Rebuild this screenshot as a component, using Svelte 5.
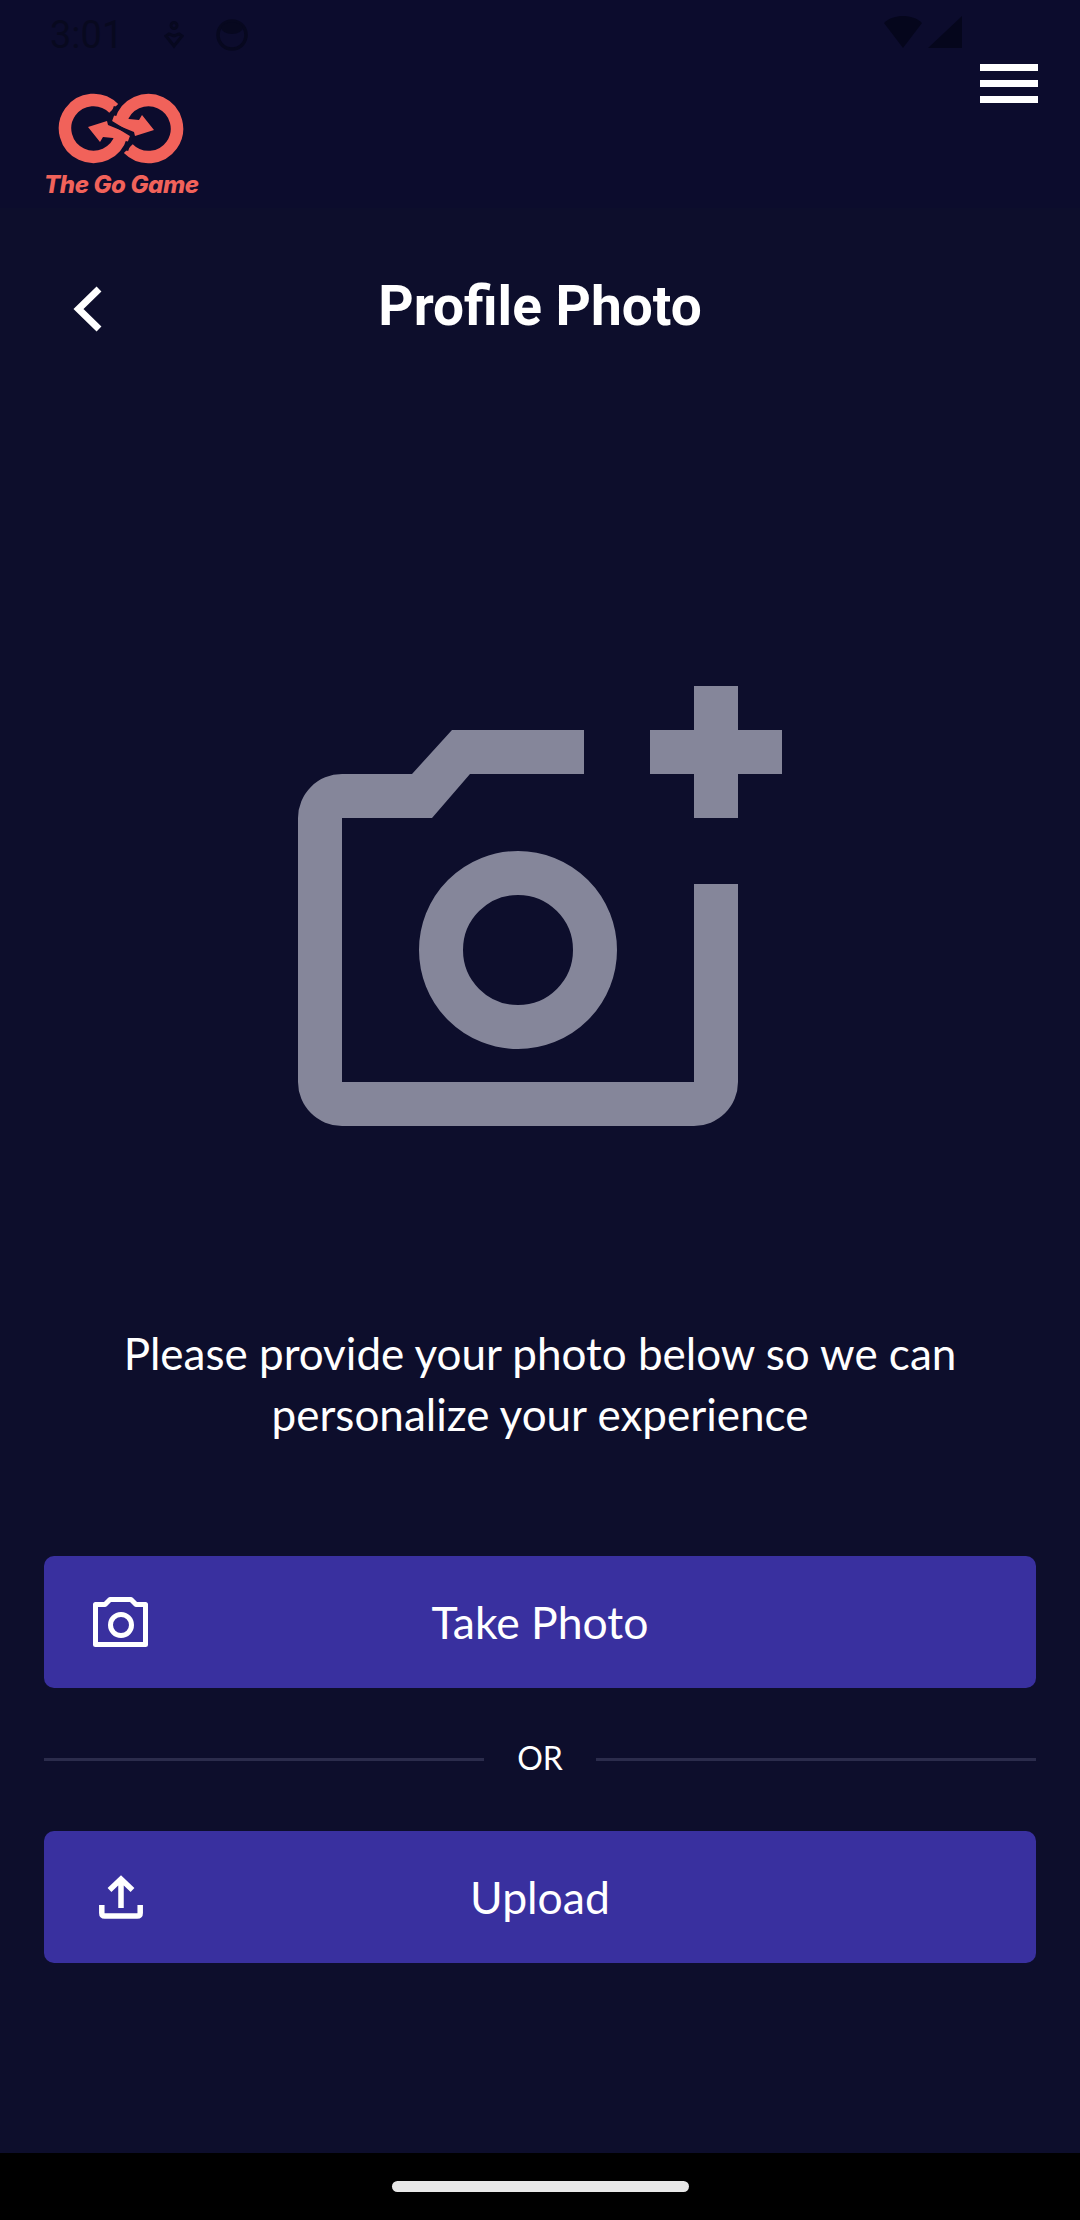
<script>
  const buttons = { take: 'Take Photo', upload: 'Upload' };
</script>

<div class="screen">
  <div class="top">
    <div class="status">
      <div class="status-left">
        <span class="time">3:01</span>
        <svg class="st-a" width="20" height="28" viewBox="0 0 20 28" fill="none" stroke="#07081f" stroke-width="3"><circle cx="10" cy="4.500" r="3"/><path d="M2 15l3-2 5 2 5-2 3 2-8 10z"/></svg>
        <svg class="st-b" width="32" height="32" viewBox="0 0 32 32"><circle cx="16" cy="16" r="14" fill="none" stroke="#07081f" stroke-width="3.500"/><path d="M5 8a13 10 0 0 1 22 0a11 7 0 0 1-22 0z" fill="#07081f"/></svg>
      </div>
      <div class="status-right">
        <svg width="40" height="32" viewBox="0 0 40 32"><path d="M1 7C6 2 13 0 20 0s14 2 19 7L20 32z" fill="#05061c"/></svg>
        <svg width="34" height="32" viewBox="0 0 34 32"><path d="M34 0v32H0z" fill="#05061c"/></svg>
      </div>
    </div>

    <div class="brand">
      <div class="logo">
        <svg class="go" width="130" height="76" viewBox="0 0 130 76">
          <path d="M57.700 18.300A28.500 28.500 0 1 0 65 46" fill="none" stroke="#f1625a" stroke-width="12.500"/>
          <path d="M32 37L51 31 52 35 74 44 74 52 57 48 47 47 44 52z" fill="#f1625a"/>
          <g transform="rotate(180 65 38.500)">
            <path d="M57.700 18.300A28.500 28.500 0 1 0 65 46" fill="none" stroke="#f1625a" stroke-width="12.500"/>
            <path d="M32 37L51 31 52 35 74 44 74 52 57 48 47 47 44 52z" fill="#f1625a"/>
          </g>
          <path d="M59.500 16.500L54 31.700 76 45.300 70.500 60.500" fill="none" stroke="#0d0e2c" stroke-width="3.500"/>
        </svg>
        <span class="wordmark">The Go Game</span>
      </div>
      <button class="menu" aria-label="Menu"><span></span><span></span><span></span></button>
    </div>
  </div>

  <header class="title-row">
    <button class="back" aria-label="Back">
      <svg width="32" height="46" viewBox="0 0 32 46" fill="none" stroke="#fff" stroke-width="7"><path d="M28 3L7.500 23l20.500 20"/></svg>
    </button>
    <h1>Profile Photo</h1>
  </header>

  <main>
    <svg class="hero" width="484" height="440" viewBox="298 686 484 440">
      <path fill="#85869a" d="M584 730H452L412 774H342A44 44 0 0 0 298 818V1082A44 44 0 0 0 342 1126H694A44 44 0 0 0 738 1082V884H694V1082H342V818H432L470 774H584Z"/>
      <circle cx="518" cy="950" r="77" fill="none" stroke="#85869a" stroke-width="44"/>
      <path fill="#85869a" d="M694 686h44v44h44v44h-44v44h-44v-44h-44v-44h44z"/>
    </svg>

    <p class="lead">Please provide your photo below so we can<br />personalize your experience</p>

    <button class="action">
      <svg class="cam" width="55" height="50" viewBox="0 0 55 50" fill="none" stroke="#fff" stroke-width="5" stroke-linejoin="round"><path d="M2.500 7.500H12L17 2.500H38L43 7.500H52.500V47.500H2.500Z"/><circle cx="28" cy="28" r="10.500"/></svg>
      {buttons.take}
    </button>

    <div class="or"><i></i><span>OR</span><i></i></div>

    <button class="action">
      <svg class="up" width="44" height="44" viewBox="0 0 44 44" fill="none" stroke="#fff" stroke-width="5.500"><path d="M22 33V5M10.500 15L22 4l11.500 11"/><path d="M2.800 30v8q0 3 3 3h32.400q3 0 3-3v-8"/></svg>
      {buttons.upload}
    </button>
  </main>

  <footer class="nav"><span class="pill"></span></footer>
</div>

<style>
  :global(body) { margin: 0; background: #0d0e2c; }
  .screen { width: 1080px; height: 2220px; display: flex; flex-direction: column; background: #0d0e2c; overflow: hidden; }
  .top { height: 208px; background: #0c0c2d; }
  .status { height: 64px; padding: 15px 118px 0 50px; box-sizing: border-box; display: flex; justify-content: space-between; align-items: flex-start; }
  .status-left { display: flex; align-items: center; }
  .time { font: 400 38px/40px Roboto, sans-serif; color: #08091f; }
  .st-a { margin-left: 41px; }
  .st-b { margin-left: 32px; }
  .status-right { display: flex; gap: 5px; margin-top: 1px; }
  .brand { display: flex; justify-content: space-between; align-items: flex-start; padding: 0 42px 0 44px; }
  .logo { display: flex; flex-direction: column; align-items: flex-start; margin-top: 26px; width: 160px; }
  .go { margin-left: 12px; }
  .wordmark { font: italic 800 24px/26px Inter, sans-serif; color: #f1625a; white-space: nowrap; letter-spacing: -.4px; margin-top: 6px; }
  button { border: 0; background: none; padding: 0; }
  .menu { display: flex; flex-direction: column; gap: 9px; }
  .menu span { display: block; width: 58px; height: 7px; background: #fff; }
  .title-row { position: relative; height: 96px; display: flex; align-items: center; justify-content: center; margin-top: 50px; }
  .back { position: absolute; left: 71px; top: 28px; height: 46px; }
  h1 { margin: 0; font: 700 55px/60px Roboto, sans-serif; color: #fff; }
  main { flex: 1; display: flex; flex-direction: column; padding: 0 44px; }
  .hero { align-self: flex-start; margin: 332px 0 0 254px; }
  .lead { margin: 197px 0 0; text-align: center; color: #fff; font: 400 44px/61px Lato, sans-serif; }
  .action { position: relative; height: 132px; border-radius: 10px; background: #39309f; color: #fff; font: 400 44.500px/130px Lato, sans-serif; text-align: center; }
  .lead + .action { margin-top: 111px; }
  .cam { position: absolute; left: 49px; top: 41px; }
  .up { position: absolute; left: 55px; top: 44px; }
  .or { display: flex; align-items: center; gap: 33px; height: 143px; color: #fff; font: 400 32px/36px Lato, sans-serif; }
  .or span { margin-top: -3px; }
  .or i { flex: 1; height: 3px; background: #2b2c4c; }
  .nav { flex: none; height: 67px; background: #000; display: flex; justify-content: center; padding-top: 28px; box-sizing: border-box; }
  .pill { width: 297px; height: 11px; border-radius: 6px; background: #e8e8e8; }
</style>
